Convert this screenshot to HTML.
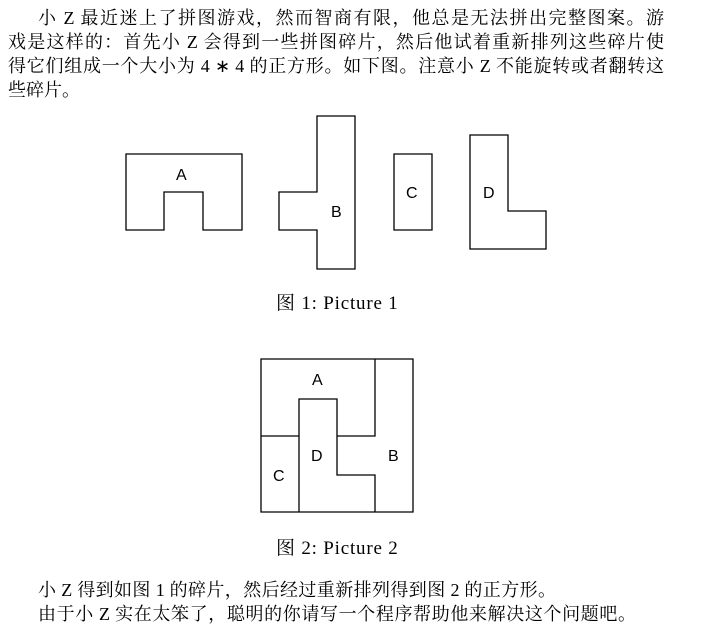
<!DOCTYPE html>
<html><head><meta charset="utf-8"><style>
body{margin:0;width:708px;height:636px;background:#fff;font-family:"Liberation Serif","Noto Serif CJK SC",serif;color:#000;position:relative;overflow:hidden}
.l{position:absolute;font-size:18px;line-height:24px;white-space:nowrap;text-align:justify;text-align-last:justify}
.c{position:absolute;font-size:19px;line-height:20px;white-space:nowrap;letter-spacing:0.8px}
svg{position:absolute;left:0;top:0}
svg text{font-family:"Liberation Sans",sans-serif;font-size:16px}
</style></head><body>
<div class="l" style="left:38px;top:6px;width:626px">小 Z 最近迷上了拼图游戏，然而智商有限，他总是无法拼出完整图案。游</div>
<div class="l" style="left:8px;top:30px;width:656px">戏是这样的：首先小 Z 会得到一些拼图碎片，然后他试着重新排列这些碎片使</div>
<div class="l" style="left:8px;top:54px;width:656px">得它们组成一个大小为 4 ∗ 4 的正方形。如下图。注意小 Z 不能旋转或者翻转这</div>
<div class="l" style="left:8px;top:78px;text-align-last:auto">些碎片。</div>
<svg width="708" height="636" fill="none" stroke="#000" stroke-width="1.3">
<path d="M126 154H242V230H203V192H164V230H126Z"/>
<path d="M317 116H355V269H317V230H279V192H317Z"/>
<path d="M394 154H432V230H394Z"/>
<path d="M470 135H508V211H546V249H470Z"/>
<g stroke="none" fill="#000"><text x="176" y="180">A</text><text x="331" y="217">B</text><text x="406" y="198">C</text><text x="483" y="198">D</text></g>
<path d="M261 359H413V512H261Z"/>
<path d="M375 359V436H337V399H299V512M261 436H299M337 436V475H375V512"/>
<g stroke="none" fill="#000"><text x="312" y="385">A</text><text x="311" y="461">D</text><text x="273" y="481">C</text><text x="388" y="461">B</text></g>
</svg>
<div class="c" style="left:276px;top:294px">图 1: Picture 1</div>
<div class="c" style="left:276px;top:539px">图 2: Picture 2</div>
<div class="l" style="left:38px;top:578px;width:518px">小 Z 得到如图 1 的碎片，然后经过重新排列得到图 2 的正方形。</div>
<div class="l" style="left:38px;top:602px;width:598px">由于小 Z 实在太笨了，聪明的你请写一个程序帮助他来解决这个问题吧。</div>
</body></html>
